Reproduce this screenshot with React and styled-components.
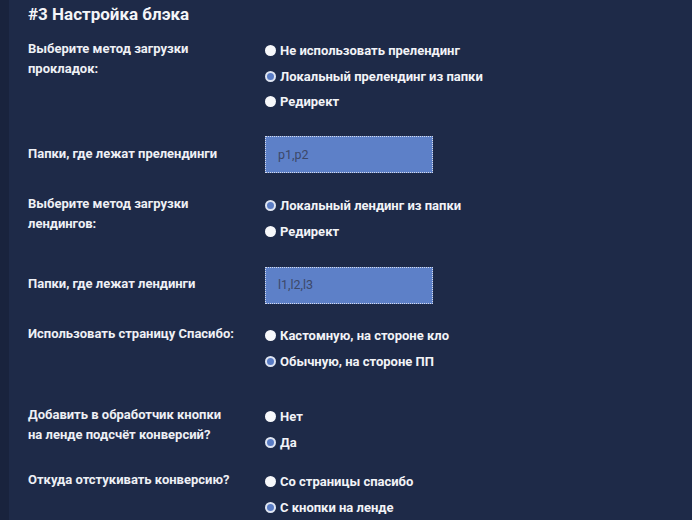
import React from "react";
import styled, { createGlobalStyle } from "styled-components";

const Global = createGlobalStyle`
  html, body { margin: 0; padding: 0; background: #1e2a48; }
  body { font-family: Roboto, "Noto Sans", Arial, sans-serif; }
`;

const Page = styled.div`
  display: flex;
  min-height: 520px;
  width: 692px;
  background: #1e2a48;
`;

const SideStrip = styled.div`
  width: 9px;
  flex-shrink: 0;
  background: #19233d;
`;

const Content = styled.div`
  flex: 1;
  padding: 3px 0 0 19px;
  color: #f2f3f7;
`;

const Title = styled.h2`
  margin: 0;
  font-size: 17px;
  line-height: 22px;
  font-weight: 700;
  color: #f4f5f8;
`;

const Row = styled.div`
  display: flex;
  align-items: ${(p) => (p.$center ? "center" : "flex-start")};
  margin-top: ${(p) => p.$mt}px;
`;

const Label = styled.div`
  width: 237px;
  flex-shrink: 0;
  font-size: 13px;
  line-height: 20px;
  font-weight: 700;
  padding-top: ${(p) => (p.$center ? 0 : 1)}px;
  margin-top: ${(p) => (p.$center ? -2 : 0)}px;
  color: #eef0f5;
`;

const RadioGroup = styled.div`
  display: flex;
  flex-direction: column;
`;

const RadioItem = styled.label`
  display: flex;
  align-items: center;
  height: 25.5px;
  font-size: 13px;
  font-weight: 700;
  color: #f2f3f7;
  gap: 4px;
`;

const Dot = styled.span`
  width: 11px;
  height: 11px;
  border-radius: 50%;
  box-sizing: border-box;
  flex-shrink: 0;
  background: ${(p) => (p.$checked ? "#5a7cc4" : "#f7f8fb")};
  border: ${(p) => (p.$checked ? "2px solid #dfe5f2" : "none")};
`;

const TextBox = styled.div`
  width: 168px;
  height: 37px;
  box-sizing: border-box;
  background: #5d80c8;
  border: 1px dotted #d5dbec;
  display: flex;
  align-items: center;
  padding: 0 0 1px 12px;
  font-size: 12.5px;
  color: #3c4868;
`;

const Radio = ({ items, checked }) => (
  <RadioGroup>
    {items.map((t, i) => (
      <RadioItem key={t}>
        <Dot $checked={i === checked} />
        {t}
      </RadioItem>
    ))}
  </RadioGroup>
);

export default function App() {
  return (
    <>
      <Global />
      <Page>
        <SideStrip />
        <Content>
          <Title>#3 Настройка блэка</Title>
          <Row $mt={13}>
            <Label>Выберите метод загрузки<br />прокладок:</Label>
            <Radio
              items={["Не использовать прелендинг", "Локальный прелендинг из папки", "Редирект"]}
              checked={1}
            />
          </Row>
          <Row $mt={21.5} $center>
            <Label $center>Папки, где лежат прелендинги</Label>
            <TextBox>p1,p2</TextBox>
          </Row>
          <Row $mt={20}>
            <Label>Выберите метод загрузки<br />лендингов:</Label>
            <Radio items={["Локальный лендинг из папки", "Редирект"]} checked={0} />
          </Row>
          <Row $mt={22.75} $center>
            <Label $center>Папки, где лежат лендинги</Label>
            <TextBox>l1,l2,l3</TextBox>
          </Row>
          <Row $mt={19}>
            <Label>Использовать страницу Спасибо:</Label>
            <Radio items={["Кастомную, на стороне кло", "Обычную, на стороне ПП"]} checked={1} />
          </Row>
          <Row $mt={30}>
            <Label>Добавить в обработчик кнопки<br />на ленде подсчёт конверсий?</Label>
            <Radio items={["Нет", "Да"]} checked={1} />
          </Row>
          <Row $mt={14}>
            <Label>Откуда отстукивать конверсию?</Label>
            <Radio items={["Со страницы спасибо", "С кнопки на ленде"]} checked={1} />
          </Row>
        </Content>
      </Page>
    </>
  );
}
